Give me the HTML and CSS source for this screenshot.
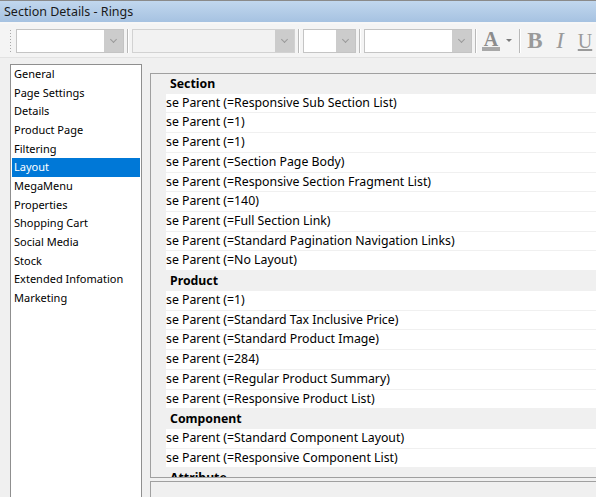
FILE: index.html
```html
<!DOCTYPE html>
<html>
<head>
  <title>Section Details - Rings</title>
  <link rel="stylesheet" href="styles.css">
</head>
<body>
  <div class="window">
    <div class="titlebar">Section Details - Rings</div>

    <!-- formatting toolbar -->
    <div class="toolbar">
      <div class="grip"></div>
      <div class="combo" style="width: 108px"><span class="combo-drop"></span></div>
      <div class="sep"></div>
      <div class="combo disabled" style="width: 163px"><span class="combo-drop"></span></div>
      <div class="sep"></div>
      <div class="combo" style="width: 53px"><span class="combo-drop"></span></div>
      <div class="sep"></div>
      <div class="combo" style="width: 108px"><span class="combo-drop"></span></div>
      <div class="sep"></div>
      <div class="tool-color">
        <span class="color-a">A</span>
        <span class="color-arrow"></span>
      </div>
      <div class="sep"></div>
      <div class="tool tool-b">B</div>
      <div class="tool tool-i">I</div>
      <div class="tool tool-u">U</div>
    </div>

    <div class="content">
      <ul class="nav-list">
        <li>General</li>
        <li>Page Settings</li>
        <li>Details</li>
        <li>Product Page</li>
        <li>Filtering</li>
        <li class="selected">Layout</li>
        <li>MegaMenu</li>
        <li>Properties</li>
        <li>Shopping Cart</li>
        <li>Social Media</li>
        <li>Stock</li>
        <li>Extended Infomation</li>
        <li>Marketing</li>
      </ul>

      <div class="right">
        <div class="grid">
          <div class="grid-scroll">
            <div class="category">Section</div>
            <div class="row"><span>Use Parent (=Responsive Sub Section List)</span></div>
            <div class="row"><span>Use Parent (=1)</span></div>
            <div class="row"><span>Use Parent (=1)</span></div>
            <div class="row"><span>Use Parent (=Section Page Body)</span></div>
            <div class="row"><span>Use Parent (=Responsive Section Fragment List)</span></div>
            <div class="row"><span>Use Parent (=140)</span></div>
            <div class="row"><span>Use Parent (=Full Section Link)</span></div>
            <div class="row"><span>Use Parent (=Standard Pagination Navigation Links)</span></div>
            <div class="row"><span>Use Parent (=No Layout)</span></div>
            <div class="category">Product</div>
            <div class="row"><span>Use Parent (=1)</span></div>
            <div class="row"><span>Use Parent (=Standard Tax Inclusive Price)</span></div>
            <div class="row"><span>Use Parent (=Standard Product Image)</span></div>
            <div class="row"><span>Use Parent (=284)</span></div>
            <div class="row"><span>Use Parent (=Regular Product Summary)</span></div>
            <div class="row"><span>Use Parent (=Responsive Product List)</span></div>
            <div class="category">Component</div>
            <div class="row"><span>Use Parent (=Standard Component Layout)</span></div>
            <div class="row"><span>Use Parent (=Responsive Component List)</span></div>
            <div class="category">Attribute</div>
          </div>
        </div>
        <div class="description"></div>
      </div>
    </div>
  </div>
</body>
</html>
```

FILE: styles.css
```css
body {
  margin: 0;
  background-color: #f0f0f0;
  font-family: "Noto Sans", Arial, sans-serif;
  font-size: 12px;
  color: #000000;
}

.window {
  width: 596px;
  height: 497px;
  overflow: hidden;
  border-top: 1px solid #8a8a8a;
  box-sizing: border-box;
}

.titlebar {
  height: 21px;
  line-height: 21px;
  padding-left: 4px;
  font-size: 12.5px;
  color: #1a1a1a;
  background: linear-gradient(#c1d7ee, #a6c2e1);
  border-bottom: 2px solid #f7f7f7;
}

.toolbar {
  display: flex;
  align-items: center;
  gap: 3px;
  height: 33px;
  padding-left: 10px;
  background-color: #f4f4f4;
  border-bottom: 1px solid #e2e2e2;
}

.grip {
  width: 2px;
  height: 23px;
  margin-right: 2px;
  background-image: radial-gradient(circle, #a8a8a8 0.8px, transparent 1px);
  background-size: 2px 3px;
}

.combo {
  position: relative;
  flex-shrink: 0;
  height: 24px;
  box-sizing: border-box;
  background-color: #ffffff;
  border: 1px solid #c4c4c4;
}

.combo.disabled {
  background-color: #f2f2f2;
  border-color: #d2d2d2;
}

.combo-drop {
  position: absolute;
  top: 0;
  right: 0;
  bottom: 0;
  width: 19px;
  background-color: #cccccc;
}

.combo-drop::after {
  content: "";
  position: absolute;
  left: 7px;
  top: 7px;
  width: 4px;
  height: 4px;
  border-right: 1px solid #9a9a9a;
  border-bottom: 1px solid #9a9a9a;
  transform: rotate(45deg);
}

.sep {
  flex-shrink: 0;
  width: 1px;
  height: 24px;
  background-color: #b9b9b9;
  border-right: 1px solid #ffffff;
}

.tool-color {
  display: flex;
  align-items: center;
  flex-shrink: 0;
  width: 36px;
  height: 24px;
  padding-left: 2px;
  box-sizing: border-box;
}

.color-a {
  width: 18px;
  font-family: "Liberation Serif", serif;
  font-weight: bold;
  font-size: 20px;
  line-height: 16px;
  color: #8c8c8c;
  text-align: center;
  border-bottom: 4px solid #a8a8a8;
}

.color-arrow {
  margin-left: 6px;
  width: 0;
  height: 0;
  border-left: 3px solid transparent;
  border-right: 3px solid transparent;
  border-top: 3px solid #7a7a7a;
}

.tool {
  flex-shrink: 0;
  width: 22px;
  height: 24px;
  line-height: 24px;
  text-align: center;
  font-family: "Liberation Serif", serif;
  font-size: 23px;
  color: #9a9a9a;
}

.tool-b {
  font-weight: bold;
}

.tool-i {
  font-style: italic;
}

.tool-u {
  font-size: 20px;
  text-decoration: underline;
}

.content {
  display: flex;
  align-items: flex-start;
  padding-left: 10px;
}

.nav-list {
  flex-shrink: 0;
  list-style: none;
  margin: 6px 0 0 0;
  padding: 0 1px;
  width: 132px;
  height: 460px;
  box-sizing: border-box;
  background-color: #ffffff;
  border: 1px solid #8f8f8f;
  font-size: 11px;
}

.nav-list li {
  height: 18.67px;
  line-height: 18.67px;
  padding-left: 2px;
  white-space: nowrap;
}

.nav-list li.selected {
  background-color: #0078d7;
  color: #ffffff;
}

.right {
  flex-shrink: 0;
  margin-left: 8px;
  margin-top: 15px;
  width: 460px;
}

.grid {
  border: 1px solid #a0a0a0;
  border-right: none;
  background-color: #f0f0f0;
  font-size: 12.3px;
}

.grid-scroll {
  height: 403px;
  overflow: hidden;
}

.category {
  height: 19.72px;
  line-height: 19.72px;
  padding-left: 19px;
  font-weight: bold;
}

.row {
  height: 18.72px;
  line-height: 18.72px;
  margin-bottom: 1px;
  margin-left: 15px;
  background-color: #ffffff;
  overflow: hidden;
  white-space: nowrap;
}

.row span {
  display: inline-block;
  margin-left: -9px;
}

.description {
  height: 30px;
  margin-top: 3px;
  border-top: 1px solid #a0a0a0;
  border-left: 1px solid #a0a0a0;
}
```
